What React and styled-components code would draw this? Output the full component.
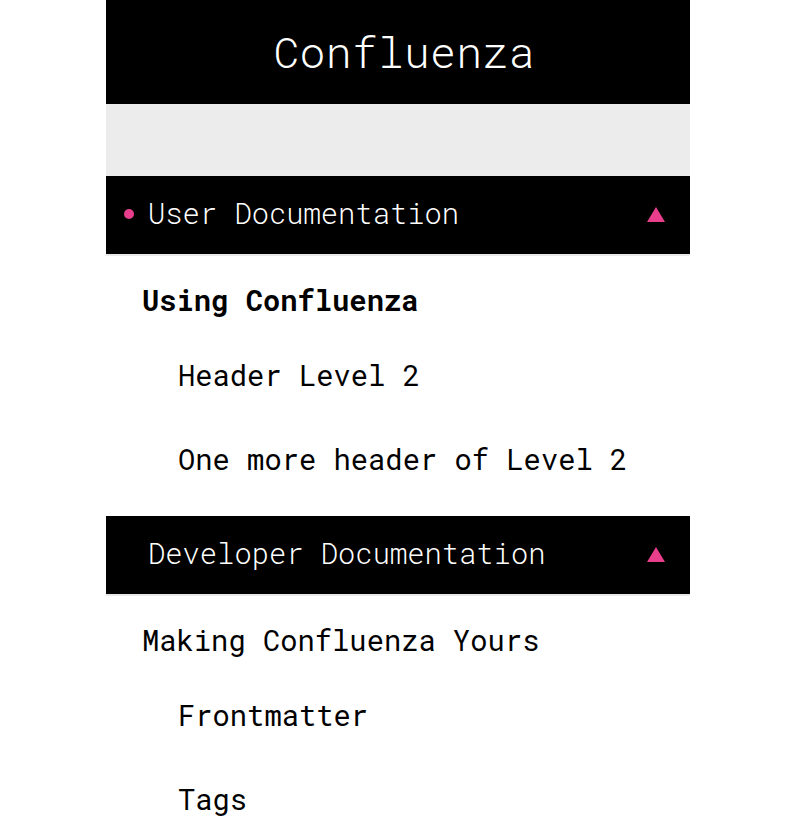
import React from "react";
import styled, { createGlobalStyle } from "styled-components";

const Global = createGlobalStyle`
  html, body { margin: 0; padding: 0; background: #fff; }
  body { font-family: "Roboto Mono", "DejaVu Sans Mono", monospace; }
  * { box-sizing: border-box; }
`;

const Page = styled.div`
  display: flex;
  justify-content: center;
  padding-right: 10px;
`;

const Sidebar = styled.nav`
  width: 584px;
  display: flex;
  flex-direction: column;
`;

const Brand = styled.header`
  height: 104px;
  padding: 0 0 2px 12px;
  background: #000;
  color: #fff;
  display: flex;
  align-items: center;
  justify-content: center;
  font-size: 43.2px;
  letter-spacing: 0.2px;
  font-weight: 300;
`;

const Band = styled.div`
  height: 72px;
  background: #ececec;
`;

const SectionHeader = styled.div`
  position: relative;
  height: 80px;
  background: #000;
  border-bottom: 2px solid #e9e9e9;
  color: #fff;
  display: flex;
  align-items: center;
  justify-content: space-between;
  padding: 0 25px 4px 42px;
  font-size: 28.8px;
  font-weight: 300;

  &::before {
    content: "";
    display: ${(p) => (p.$active ? "block" : "none")};
    position: absolute;
    left: 18px;
    top: 33px;
    width: 10px;
    height: 10px;
    border-radius: 50%;
    background: #e83e8c;
  }
`;

const SectionTitle = styled.span`
  line-height: 33px;
`;

const Caret = styled.svg`
  width: 18px;
  height: 15px;
  display: block;
  margin-top: 2px;
`;

const List = styled.div`
  display: flex;
  flex-direction: column;
  padding: 28px 0 40px;
`;

const Heading = styled.div`
  font-size: 28.8px;
  line-height: 33px;
  color: #000;
  padding-left: 36px;
  margin-bottom: 42px;
  font-weight: ${(p) => (p.$active ? 700 : 400)};
`;

const SubList = styled.div`
  display: flex;
  flex-direction: column;
  gap: 51px;
`;

const SubItem = styled.div`
  font-size: 28.8px;
  line-height: 33px;
  font-weight: 400;
  color: #000;
  padding-left: 72px;
`;

const sections = [
  {
    title: "User Documentation",
    active: true,
    heading: "Using Confluenza",
    items: ["Header Level 2", "One more header of Level 2"],
  },
  {
    title: "Developer Documentation",
    active: false,
    heading: "Making Confluenza Yours",
    items: ["Frontmatter", "Tags"],
  },
];

export default function App() {
  return (
    <>
      <Global />
      <Page>
        <Sidebar>
          <Brand>Confluenza</Brand>
          <Band />
          {sections.map((s) => (
            <React.Fragment key={s.title}>
              <SectionHeader $active={s.active}>
                <SectionTitle>{s.title}</SectionTitle>
                <Caret viewBox="0 0 18 15">
                  <polygon points="9,0 18,15 0,15" fill="#e83e8c" />
                </Caret>
              </SectionHeader>
              <List>
                <Heading $active={s.active}>{s.heading}</Heading>
                <SubList>
                  {s.items.map((it) => (
                    <SubItem key={it}>{it}</SubItem>
                  ))}
                </SubList>
              </List>
            </React.Fragment>
          ))}
        </Sidebar>
      </Page>
    </>
  );
}
